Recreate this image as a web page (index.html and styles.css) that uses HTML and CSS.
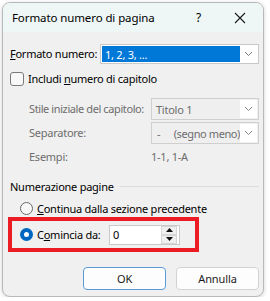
FILE: index.html
```html
<!DOCTYPE html>
<html lang="it">
<head>
<meta charset="utf-8">
<link rel="stylesheet" href="styles.css">
</head>
<body>
<div class="win">
  <div class="titlebar">
    <span class="title">Formato numero di pagina</span>
    <span class="help">?</span>
    <svg class="close" width="12" height="12" viewBox="0 0 12 12"><path d="M1 1L11 11M11 1L1 11" stroke="#1a1a1a" stroke-width="1.1" fill="none"/></svg>
  </div>
  <div class="content">
    <div class="row r-format">
      <span class="lbl w90"><u>F</u>ormato numero:</span>
      <div class="select active">
        <span class="val">1, 2, 3, ...</span>
        <span class="drop"><svg width="9" height="6" viewBox="0 0 9 6"><path d="M1 1L4.5 4.5L8 1" stroke="#777" fill="none"/></svg></span>
      </div>
    </div>
    <div class="row r-check">
      <span class="checkbox"></span>
      <span class="lbl">Includi <u>n</u>umero di capitolo</span>
    </div>
    <div class="group">
      <div class="row r-sub">
        <span class="lbl dis w122 tight">Stile iniziale del capitolo:</span>
        <div class="select disabled">
          <span class="val">Titolo 1</span>
          <span class="drop"><svg width="9" height="6" viewBox="0 0 9 6"><path d="M1 1L4.5 4.5L8 1" stroke="#888" fill="none"/></svg></span>
        </div>
      </div>
      <div class="row r-sub r-sep">
        <span class="lbl dis w122">Separatore:</span>
        <div class="select disabled">
          <span class="val tight"><span class="dash">-</span>(segno meno)</span>
          <span class="drop"><svg width="9" height="6" viewBox="0 0 9 6"><path d="M1 1L4.5 4.5L8 1" stroke="#888" fill="none"/></svg></span>
        </div>
      </div>
      <div class="row r-ex">
        <span class="lbl dis w122">Esempi:</span>
        <span class="lbl dis">1-1, 1-A</span>
      </div>
    </div>
    <div class="row r-section">
      <span class="lbl">Numerazione pagine</span>
      <span class="line"></span>
    </div>
    <div class="row r-radio">
      <span class="radio"></span>
      <span class="lbl"><u>C</u>ontinua dalla sezione precedente</span>
    </div>
    <div class="highlight">
      <span class="radio on"></span>
      <span class="lbl w72">C<u>o</u>mincia da:</span>
      <div class="spin">
        <span class="spinval">0</span>
        <span class="spinbtns">
          <span class="sb"><svg width="7" height="4" viewBox="0 0 7 4"><path d="M0 4L3.5 0L7 4Z" fill="#111"/></svg></span>
          <span class="sb"><svg width="7" height="4" viewBox="0 0 7 4"><path d="M0 0L3.5 4L7 0Z" fill="#111"/></svg></span>
        </span>
      </div>
    </div>
    <div class="buttons">
      <button class="btn default">OK</button>
      <button class="btn">Annulla</button>
    </div>
  </div>
</div>
</body>
</html>
```
FILE: styles.css
```css
html, body {
  margin: 0;
  padding: 0;
  background: #ffffff;
}
body {
  font-family: "Noto Sans", "Segoe UI", sans-serif;
  font-size: 11px;
  letter-spacing: -0.25px;
  color: #000;
}
.win {
  box-sizing: border-box;
  margin: 2px 0 0 2px;
  width: 262px;
  height: 295px;
  border: 1px solid #b9b9b9;
  border-radius: 8px;
  background: #f0f0f0;
  overflow: hidden;
  box-shadow: 0 1px 4px rgba(0,0,0,0.18);
}
.titlebar {
  height: 29px;
  background: #eef6f6;
  display: flex;
  align-items: center;
  padding-left: 9px;
}
.title {
  font-size: 11.5px;
  letter-spacing: -0.1px;
  width: 184px;
}
.help {
  font-size: 12px;
  width: 38px;
}
.close {
  display: block;
}
.content {
  padding: 0 4px 0 7px;
}
.row {
  display: flex;
  align-items: center;
}
.lbl { white-space: nowrap; line-height: 16px; flex: none; }
.tight { letter-spacing: -0.4px; }
.w90 { width: 90px; }
.w122 { width: 122px; }
.w72 { width: 72px; }
.dis { color: #6d6d6d; }
u { text-decoration: underline; text-underline-offset: 1px; }
.r-format {
  margin-top: 12px;
  height: 20px;
}
.select {
  flex: 1;
  min-width: 0;
  box-sizing: border-box;
  display: flex;
  align-items: center;
  border: 1px solid #c9c9c9;
  padding: 1px;
  height: 100%;
  overflow: hidden;
}
.select .val {
  flex: 1;
  min-width: 0;
  height: 100%;
  display: flex;
  align-items: center;
  padding-left: 3px;
  white-space: nowrap;
  overflow: hidden;
}
.select .drop {
  flex: none;
  width: 17px;
  height: 100%;
  display: flex;
  align-items: center;
  justify-content: center;
  background: #ffffff;
}
.select.active { background: #fff; }
.select.active .val {
  background: #0078d7;
  color: #fff;
}
.select.disabled {
  background: #efefef;
  border-color: #cfcfcf;
  color: #6d6d6d;
}
.dash { display: inline-block; width: 18px; padding-left: 1px; }
.r-check {
  margin-top: 8px;
  height: 14px;
}
.checkbox {
  box-sizing: border-box;
  width: 14px;
  height: 14px;
  border: 1px solid #7a7a7a;
  border-radius: 3px;
  background: #f8f8f8;
  margin-right: 4px;
}
.group {
  padding-left: 19px;
  margin-top: 12px;
}
.r-sub { height: 22px; }
.r-sep { margin-top: 2px; }
.r-ex { height: 18px; margin-top: 4px; }
.r-section {
  margin-top: 12px;
  height: 18px;
}
.line {
  flex: 1;
  height: 1px;
  background: #dcdcdc;
  margin-left: 5px;
  margin-top: -2px;
}
.r-radio {
  margin-top: 6px;
  padding-left: 10px;
  height: 13px;
}
.radio {
  box-sizing: border-box;
  width: 13px;
  height: 13px;
  border: 1px solid #6a6a6a;
  border-radius: 50%;
  background: #f7f7f7;
  margin-right: 4px;
  flex: none;
}
.radio.on {
  border: 4px solid #0067c0;
  background: #fff;
}
.highlight {
  box-sizing: border-box;
  margin: 2px 0 0 -2px;
  width: 191px;
  height: 35px;
  border: 4px solid #ec1c24;
  display: flex;
  align-items: center;
  padding-left: 8px;
}
.spin {
  box-sizing: border-box;
  width: 71px;
  height: 20px;
  border: 1px solid #c9c9c9;
  background: #fff;
  display: flex;
  align-items: center;
}
.spinval { flex: 1; padding-left: 3px; }
.spinbtns {
  width: 16px;
  height: 18px;
  display: flex;
  flex-direction: column;
  margin-right: 2px;
}
.sb {
  flex: 1;
  box-sizing: border-box;
  border: 1px solid #d6d6d6;
  background: #efefef;
  display: flex;
  align-items: center;
  justify-content: center;
}
.buttons {
  display: flex;
  justify-content: flex-end;
  gap: 10px;
  margin-top: 15px;
  padding-right: 0;
}
.btn {
  box-sizing: border-box;
  width: 83px;
  height: 23px;
  font-family: inherit;
  font-size: 11px;
  letter-spacing: -0.1px;
  color: #1a1a1a;
  background: #fdfdfd;
  border: 1px solid #d2d2d2;
  border-radius: 4px;
  padding: 0;
}
.btn.default {
  border-color: #5a9ad6;
}
```
